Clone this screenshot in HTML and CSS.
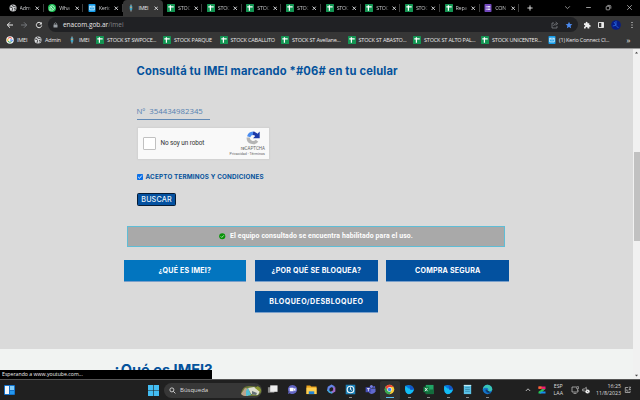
FILE: index.html
```
<!DOCTYPE html>
<html lang="es">
<head>
<meta charset="utf-8">
<title>IMEI</title>
<link rel="stylesheet" href="styles.css">
</head>
<body>
<svg class="defs" width="0" height="0">
  <defs>
    <symbol id="sheet" viewBox="0 0 8 8"><rect width="8" height="8" rx=".6" fill="#149553"/><path d="M1.3 2.8h5.4M3.4 1.2v5.6" stroke="#fff" stroke-width="1.2"/></symbol>
    <symbol id="globe" viewBox="0 0 8 8"><circle cx="4" cy="4" r="3.5" fill="#d8dadd"/><path d="M1 3l2 .4.6 1.2L3 6.8M3 .9l.8 1.3 1.4.1L6.8 3M5 4.2l1.5.6-1 1.6" stroke="#333" fill="none" stroke-width=".9"/></symbol>
    <symbol id="mail" viewBox="0 0 8 8"><rect x=".5" width="7" height="8" rx=".7" fill="#149cea"/><path d="M1.7 2.2h4.6v3.7H1.7zM1.7 2.3L4 4.3l2.3-2" fill="none" stroke="#fff" stroke-width=".7"/></symbol>
    <symbol id="enacom" viewBox="0 0 8 8"><path d="M4 .5v7" stroke="#cfd8dd" stroke-width=".8"/><path d="M2.7 2.3L4 1.2l1.3 1.1v3L4 6.6 2.7 5.3z" fill="#36a7ca"/><circle cx="4" cy="3.4" r=".8" fill="#e8a06a"/></symbol>
    <symbol id="close" viewBox="0 0 4 4"><path d="M.5.5l3 3m0-3l-3 3" stroke="#e2e3e5" stroke-width=".8"/></symbol>
    <symbol id="webdev" viewBox="0 0 12 12"><path d="M1.5 2Q4 .5 7 1.3T11 6q-.5 3-3.5 4.5T2 9Q.5 5 1.5 2z" fill="#0878dc"/><path d="M1.5 2L5 5l6 .8Q10 9.5 7 10.7T2 9Q.5 5 1.5 2z" fill="#14bdf2"/><path d="M6 1.5Q10 2 11 6L7 6.5z" fill="#1454c5"/></symbol>
  </defs>
</svg>

<header class="browser">
  <nav class="tabs">
    <div class="tab"><svg><use href="#globe"/></svg><span>Adm</span><svg class="x"><use href="#close"/></svg></div>
    <div class="tab"><svg viewBox="0 0 8 8"><circle cx="4" cy="4" r="4" fill="#20c45a"/><path d="M1.7 6.3l.4-1.4a2.2 2.2 0 1 1 .9 1z" fill="none" stroke="#fff" stroke-width=".7"/><path d="M3.1 3l.7 1.2 1.1.7" stroke="#fff" stroke-width=".8" fill="none"/></svg><span>Wha</span><svg class="x"><use href="#close"/></svg></div>
    <div class="tab"><svg><use href="#mail"/></svg><span>Keric</span><svg class="x"><use href="#close"/></svg></div>
    <div class="tab active"><svg><use href="#enacom"/></svg><span>IMEI</span><svg class="x"><use href="#close"/></svg></div>
    <div class="tab"><svg><use href="#sheet"/></svg><span>STOC</span><svg class="x"><use href="#close"/></svg></div>
    <div class="tab"><svg><use href="#sheet"/></svg><span>STOC</span><svg class="x"><use href="#close"/></svg></div>
    <div class="tab"><svg><use href="#sheet"/></svg><span>STOC</span><svg class="x"><use href="#close"/></svg></div>
    <div class="tab"><svg><use href="#sheet"/></svg><span>STOC</span><svg class="x"><use href="#close"/></svg></div>
    <div class="tab"><svg><use href="#sheet"/></svg><span>STOC</span><svg class="x"><use href="#close"/></svg></div>
    <div class="tab"><svg><use href="#sheet"/></svg><span>STOC</span><svg class="x"><use href="#close"/></svg></div>
    <div class="tab"><svg><use href="#sheet"/></svg><span>STOC</span><svg class="x"><use href="#close"/></svg></div>
    <div class="tab"><svg><use href="#sheet"/></svg><span>Repa</span><svg class="x"><use href="#close"/></svg></div>
    <div class="tab"><svg viewBox="0 0 8 8"><rect x=".5" width="7" height="8" rx=".7" fill="#7248bd"/><path d="M1.8 2.5h.8m.7 0h3M1.8 4h.8m.7 0h3M1.8 5.5h.8m.7 0h3" stroke="#fff" stroke-width=".8"/></svg><span>CON</span><svg class="x"><use href="#close"/></svg></div>
    <svg class="plus" viewBox="0 0 6 6"><path d="M3 .4v5.2M.4 3h5.2" stroke="#eee" stroke-width=".9"/></svg>
    <div class="window-controls">
      <svg viewBox="0 0 6 6"><path d="M1 2l2 2 2-2" fill="none" stroke="#aaa" stroke-width=".7"/></svg>
      <svg viewBox="0 0 6 6"><path d="M1 3h4" stroke="#bbb" stroke-width=".7"/></svg>
      <svg viewBox="0 0 6 6"><rect x="1" y="2" width="3" height="3" rx=".5" fill="none" stroke="#ccc" stroke-width=".6"/><path d="M2 1.2h2.2q.8 0 .8.8v2" fill="none" stroke="#ccc" stroke-width=".6"/></svg>
      <svg viewBox="0 0 6 6"><path d="M1 1l4 4m0-4L1 5" stroke="#ccc" stroke-width=".6"/></svg>
    </div>
  </nav>

  <div class="toolbar">
    <svg class="nav-icon" viewBox="0 0 8 8"><path d="M7 4H1.4M4 1.3L1.3 4 4 6.7" fill="none" stroke="#eee" stroke-width="1"/></svg>
    <svg class="nav-icon" viewBox="0 0 8 8"><path d="M1 4h5.6M4 1.3L6.7 4 4 6.7" fill="none" stroke="#7c7f83" stroke-width=".9"/></svg>
    <svg class="nav-icon" viewBox="0 0 8 8"><path d="M6.2 2.4A2.7 2.7 0 1 0 6.7 4.5" fill="none" stroke="#eee" stroke-width="1"/><path d="M6.8.9v2.6H4.2z" fill="#eee"/></svg>
    <div class="omnibox">
      <svg class="lock" viewBox="0 0 5 6"><rect x=".5" y="2.4" width="4" height="3.2" rx=".4" fill="#9aa0a6"/><path d="M1.4 2.6V1.5q1.1-1.4 2.2 0v1.1" fill="none" stroke="#9aa0a6" stroke-width=".7"/></svg>
      <span class="url">enacom.gob.ar<i>/imei</i></span>
      <svg class="share" viewBox="0 0 8 8"><path d="M3 2H1v5h5V5M2.5 5q.5-2.3 3-2.3M4.7 1l2 1.7-2 1.6" fill="none" stroke="#898d92" stroke-width=".7"/></svg>
      <svg class="star" viewBox="0 0 8 8"><path d="M4 .7l1 2.2 2.4.3-1.8 1.6.5 2.4L4 6 1.9 7.2l.5-2.4L.6 3.2 3 2.9z" fill="#4b8bf0"/></svg>
    </div>
    <div class="actions">
      <svg viewBox="0 0 8 8"><path d="M1 2.3h1.8q-.5-1.5.8-1.5t.9 1.5H6.3V4Q7.7 3.7 7.7 4.9T6.3 5.7V7.4H4.6Q4.6 6 3.6 6t-1 1.4H1V5.7Q2.3 5.6 2.3 4.8T1 4z" fill="#eee"/></svg>
      <svg viewBox="0 0 8 8"><path d="M1.5 1.5h5v5h-5z" fill="none" stroke="#eee" stroke-width=".9"/><path d="M4.3 1.5h2.3v5H4.3z" fill="#eee"/></svg>
      <svg class="avatar" viewBox="0 0 10 10"><circle cx="5" cy="5" r="4.8" fill="#071c87"/><path d="M5 1v4.5L7.5 8M1.8 6L5 5.2M3 2l2 3" stroke="#2a6de5" stroke-width=".8" fill="none"/></svg>
      <svg viewBox="0 0 8 8"><path d="M3.5 1h1v1h-1zm0 2.5h1v1h-1zm0 2.5h1v1h-1z" fill="#eee"/></svg>
    </div>
  </div>

  <div class="bookmarks">
    <div><svg viewBox="0 0 8 8"><circle cx="4" cy="4" r="3.8" fill="#f0f1f4"/><path d="M2 2.6A2.4 2.4 0 0 1 5.8 2.4" stroke="#ea4335" fill="none"/><path d="M1.8 2.8v2.5" stroke="#fbbc05"/><path d="M2 5.4q1.8 1.7 3.6.2" stroke="#34a853" fill="none"/><path d="M4 4h2.3q0 1-.7 1.7" stroke="#4285f4" fill="none"/></svg><span>IMEI</span></div>
    <div><svg><use href="#globe"/></svg><span>Admin</span></div>
    <div><svg><use href="#enacom"/></svg><span>IMEI</span></div>
    <div><svg><use href="#sheet"/></svg><span>STOCK ST SWPOCE...</span></div>
    <div><svg><use href="#sheet"/></svg><span>STOCK PARQUE</span></div>
    <div><svg><use href="#sheet"/></svg><span>STOCK CABALLITO</span></div>
    <div><svg><use href="#sheet"/></svg><span>STOCK ST Avellane...</span></div>
    <div><svg><use href="#sheet"/></svg><span>STOCK ST ABASTO...</span></div>
    <div><svg><use href="#sheet"/></svg><span>STOCK ST ALTO PAL...</span></div>
    <div><svg><use href="#sheet"/></svg><span>STOCK UNICENTER...</span></div>
    <div><svg><use href="#mail"/></svg><span>(1) Kerio Connect Cl...</span></div>
    <div class="more">»</div>
  </div>
</header>

<div class="viewport">
  <main>
    <section class="consulta">
      <h1>Consultá tu IMEI marcando *#06# en tu celular</h1>
      <div class="imei"><span>Nº</span><span>354434982345</span></div>
      <div class="captcha">
        <span class="box"></span><span class="robot">No soy un robot</span>
        <div class="brand">
          <svg viewBox="0 0 16 16"><path d="M3.7 6.7A4.8 4.8 0 0 1 8 3.3" fill="none" stroke="#4a8cf0" stroke-width="3.4"/><path d="M8 3.3a4.8 4.8 0 0 1 4.5 4.5" fill="none" stroke="#1c3aa9" stroke-width="3.4"/><path d="M14.7 1.5v6.8H8z" fill="#1c3aa9"/><path d="M3.2 7.5A4.9 4.9 0 0 0 12 10.7" fill="none" stroke="#b5b5b5" stroke-width="3.2"/></svg>
          <b>reCAPTCHA</b><small>Privacidad - Términos</small>
        </div>
      </div>
      <div class="terms"><svg viewBox="0 0 6 6"><rect width="6" height="6" rx=".8" fill="#0b70e8"/><path d="M1.2 3l1.3 1.3 2.3-2.8" fill="none" stroke="#fff" stroke-width=".9"/></svg><span>ACEPTO TERMINOS Y CONDICIONES</span></div>
      <button class="search-button"><span>BUSCAR</span></button>
      <div class="result"><svg viewBox="0 0 7 7"><circle cx="3.5" cy="3.5" r="3.3" fill="#079307"/><path d="M1.8 3.6L3 4.8l2.2-2.3" fill="none" stroke="#c3e9c3" stroke-width=".9"/></svg><span>El equipo consultado se encuentra habilitado para el uso.</span></div>
      <div class="topics">
        <a class="current"><span>¿QUÉ ES IMEI?</span></a>
        <a><span>¿POR QUÉ SE BLOQUEA?</span></a>
        <a><span>COMPRA SEGURA</span></a>
        <a class="second-row"><span>BLOQUEO/DESBLOQUEO</span></a>
      </div>
    </section>
    <section class="answer"><h2>¿Qué es IMEI?</h2></section>
  </main>
  <aside class="scrollbar">
    <svg viewBox="0 0 7 5"><path d="M2 3.4h3L3.5 1.7z" fill="#444"/></svg>
    <div class="thumb"></div>
    <svg class="down" viewBox="0 0 7 5"><path d="M2 1.7h3L3.5 3.5z" fill="#444"/></svg>
  </aside>
  <div class="status"><span>Esperando a www.youtube.com...</span></div>
</div>

<footer class="taskbar">
  <svg class="widgets" viewBox="0 0 11 10"><rect width="11" height="10" rx="1" fill="#1473cc"/><rect x="1" y="1" width="4" height="8" fill="#f1f6fb"/><rect x="6" y="1" width="4" height="4" fill="#82cdf8"/><rect x="6" y="6" width="4" height="3" fill="#2498ef"/></svg>
  <svg class="start" viewBox="0 0 11 11"><path d="M0 0h5.2v5.2H0zM5.8 0H11v5.2H5.8zM0 5.8h5.2V11H0zM5.8 5.8H11V11H5.8z" fill="#43bdf3"/></svg>
  <div class="search">
    <svg class="glass" viewBox="0 0 8 8"><circle cx="3.3" cy="3.3" r="2.3" fill="none" stroke="#ddd"/><path d="M5 5l2.3 2.3" stroke="#ddd"/></svg>
    <span>Búsqueda</span>
    <svg class="scene" viewBox="0 0 22 11"><path d="M1 8Q3 0 10 1l10 1q2 3 1 6l-4 3H2z" fill="#6b7838"/><path d="M1 9l4-6 5 1-2 7H2z" fill="#bba58e"/><path d="M8 3l6-1 6 4-2 4-7-1z" fill="#dedfce"/><path d="M6 6l2-3 3 7-5 1z" fill="#53bfd4"/><path d="M12 6l5 2-1 2-4-1z" fill="#667177"/><path d="M18 1l3 4-1 2-5-4z" fill="#8b962f"/></svg>
  </div>
  <div class="apps">
    <div><svg viewBox="0 0 12 12"><rect x="1" y="3.5" width="7" height="6" fill="#888"/><rect x="3.5" y="1.5" width="8" height="7" fill="#ededed"/></svg></div>
    <div><svg viewBox="0 0 12 12"><path d="M6 1a5 5 0 1 1-3 9l-2 .8.7-2.3A5 5 0 0 1 6 1z" fill="#6265c3"/><rect x="3" y="4" width="4.2" height="4" rx=".7" fill="#fff"/><path d="M7.5 5.5L9.2 4v4L7.5 6.7z" fill="#fff"/></svg></div>
    <div><svg viewBox="0 0 12 12"><path d="M.5 1.5h4l1.2 1.3h5.8V11H.5z" fill="#eaa21d"/><path d="M.5 4h11v7H.5z" fill="#ffd050"/><path d="M3 8h6v3H3z" fill="#2384d6"/></svg></div>
    <div><svg viewBox="0 0 12 12"><path d="M2.2 7.5L3 3.8 6 2l3 1.5" fill="none" stroke="#6484e8" stroke-width="2.4"/><path d="M9 3.5v4L6 9.5" fill="none" stroke="#a26bce" stroke-width="2.4"/><path d="M2 6.5l1.8 2.3 3 .8" fill="none" stroke="#43a4dc" stroke-width="2"/></svg></div>
    <div class="open"><svg viewBox="0 0 12 12"><rect x=".8" y=".8" width="10.4" height="10.4" fill="#1a82ba"/><circle cx="6" cy="6" r="3.6" fill="#176b9b" stroke="#f1f8fc" stroke-width="1.2"/><path d="M6 3.6V6l1.5 1" stroke="#fff" fill="none"/></svg></div>
    <div><svg viewBox="0 0 12 12"><circle cx="7" cy="2.8" r="1.7" fill="#7980df"/><circle cx="10" cy="3.5" r="1.2" fill="#5059c9"/><path d="M4 5h7.5v3q-1 3-4 3T4 8z" fill="#6069ce"/><rect x=".7" y="3.5" width="6" height="5.5" fill="#464eb8"/><path d="M2.2 5h3M3.7 5v3" stroke="#fff" stroke-width=".8"/></svg></div>
    <div class="focused"><svg viewBox="0 0 12 12"><circle cx="6" cy="6" r="5.2" fill="#fcc934"/><path d="M1.5 3.4A5.2 5.2 0 0 1 10.5 3.4H6L3.7 7.3z" fill="#ea4335"/><path d="M1.5 3.4A5.2 5.2 0 0 0 6 11.2L8.2 7.3H3.8z" fill="#34a853"/><circle cx="6" cy="6" r="2.5" fill="#fff"/><circle cx="6" cy="6" r="1.9" fill="#4285f4"/></svg></div>
    <div class="open"><svg><use href="#webdev"/></svg></div>
    <div class="open"><svg viewBox="0 0 12 12"><rect x="3" y="1" width="8.5" height="10" fill="#21a565"/><path d="M7 6h4.5v5H3V8h4z" fill="#136d3c"/><rect x=".5" y="3" width="6.2" height="6" fill="#107c41"/><path d="M2.2 4.3l2.7 3.5m0-3.5L2.2 7.8" stroke="#fff" stroke-width=".9"/></svg></div>
    <div class="open"><svg><use href="#webdev"/></svg></div>
    <div class="open"><svg viewBox="0 0 12 12"><rect x="2" y="1" width="8" height="10" fill="#5bc2e7"/><path d="M2 1.6h8" stroke="#c6e9f3" stroke-width="1.2"/><path d="M3.5 4h5m-5 2h5m-5 2h5" stroke="#287999" stroke-width=".7"/></svg></div>
    <div class="open"><svg viewBox="0 0 12 12"><circle cx="6" cy="6" r="5.2" fill="#1475ca"/><path d="M1 5.6A5.1 5.1 0 0 1 11.2 6q-.2 2-2.7 2T7 6.3Q7 4 4.5 4T1 5.6z" fill="#39c5b5"/><path d="M4.2 6.3Q4.5 9.8 9.5 9.7" stroke="#0b4791" stroke-width="1.3" fill="none"/><path d="M5 6.3q.5 2.5 3 2.3" stroke="#1b252e" fill="none"/></svg></div>
  </div>
  <div class="tray">
    <svg viewBox="0 0 8 8"><path d="M1.8 5L4 2.8 6.2 5" fill="none" stroke="#ddd" stroke-width=".8"/></svg>
    <svg viewBox="0 0 8 8"><path d="M.5.5h7V3L5.5 4.5H3L4 2.8H.5z" fill="#ed1c71"/><path d="M.5.5h3v2.3h-3z" fill="#f5732a"/><path d="M4.5 3H7L3 7.5H.5V5.7z" fill="#25c953"/><path d="M3 5.4h4.5v2.1H1.5z" fill="#168ef0"/></svg>
    <div class="lang">ESP<br>LAA</div>
    <svg viewBox="0 0 8 8"><path d="M5 1H1v5h6V4M2.5 7.4h3" fill="none" stroke="#ccc" stroke-width=".7"/><path d="M5.6.7h2v2h-2zM6.6 2.8v2" fill="none" stroke="#ccc" stroke-width=".6"/></svg>
    <svg viewBox="0 0 8 8"><path d="M.7 3h1.6l2-1.7v5.2l-2-1.6H.7z" fill="none" stroke="#ccc" stroke-width=".7"/><circle cx="5.6" cy="5.5" r="2.1" fill="#eee"/><path d="M4.8 4.8l1.6 1.5" stroke="#333" stroke-width=".6"/></svg>
    <div class="clock">16:25<br>11/8/2023</div>
    <svg viewBox="0 0 8 8"><path d="M4 1.5H1.3v5h4.8V4.8M4.7 1.2h2L5 3.6h2M2.8 3.3v1.8h1.7" fill="none" stroke="#ccc" stroke-width=".7"/></svg>
  </div>
</footer>
</body>
</html>
```
FILE: styles.css
```
* { box-sizing: border-box; }
body { margin: 0; width: 640px; height: 400px; overflow: hidden; display: flex; flex-direction: column; font-family: "Open Sans", "Noto Sans", sans-serif; background: #dadada; }
svg { display: block; flex: none; }
.defs { position: absolute; }
span, h1, h2 { white-space: nowrap; }

.browser { height: 48.5px; flex: none; background: #363636; color: #e8e8e8; border-bottom: .5px solid #999; }
.tabs { height: 16px; padding-left: 4px; display: flex; align-items: center; background: #000; }
.tab { width: 39.65px; height: 15px; flex: none; display: flex; align-items: center; padding-left: 4.5px; font-size: 5.4px; color: #c9cacc; background: linear-gradient(#3d3d3d, #3d3d3d) right center / 1px 8px no-repeat; }
.tab svg { width: 8px; height: 8px; }
.tab span { width: 12.5px; margin-left: 3px; letter-spacing: -.25px; line-height: 8px; -webkit-mask-image: linear-gradient(90deg, #000 65%, transparent); mask-image: linear-gradient(90deg, #000 65%, transparent); }
.tab .x { width: 4.5px; height: 4.5px; margin-left: 3px; }
.tab.active { height: 16px; background: #363636; border-radius: 4px 4px 0 0; color: #e8e8e8; }
.tab.active span { -webkit-mask-image: none; mask-image: none; }
.plus { width: 6px; height: 6px; margin-left: 8px; }
.window-controls { display: flex; gap: 13.6px; margin-left: auto; padding-right: 7px; position: relative; top: -1px; }
.window-controls svg { width: 7px; height: 7px; }
.toolbar { height: 17px; display: flex; align-items: center; padding-left: 6px; }
.nav-icon { width: 8px; height: 8px; margin-right: 6.3px; }
.omnibox { width: 530px; height: 15px; border-radius: 8px; background: #202124; display: flex; align-items: center; padding-left: 5px; margin-left: -1px; }
.lock { width: 5px; height: 6px; }
.url { font-size: 6.5px; margin-left: 5px; line-height: 9px; }
.url i { font-style: normal; color: #83868a; }
.share { width: 8px; height: 8px; margin-left: auto; }
.star { width: 8px; height: 8px; margin: 0 4.5px 0 6.5px; }
.actions { display: flex; align-items: center; gap: 6.3px; margin-left: 5px; }
.actions svg { width: 8px; height: 8px; }
.actions .avatar { width: 10px; height: 10px; }
.bookmarks { height: 14px; padding-left: 6px; display: grid; grid-template-columns: 28px 34px 28px 67px 56.5px 61.5px 66.5px 65.5px 68px 67px 78.5px 9px; align-items: center; font-size: 5.5px; }
.bookmarks div { display: flex; align-items: center; gap: 3px; }
.bookmarks svg { width: 8px; height: 8px; }
.bookmarks span { letter-spacing: -.18px; line-height: 8px; }
.bookmarks .more { font-size: 8px; line-height: 8px; }

.viewport { height: 330.5px; flex: none; display: flex; position: relative; }
main { width: 633px; background: #f1f3f2; }
.consulta { height: 300.5px; background: #dadada; padding: 14px 0 0 123.5px; color: #04529c; }
h1, h2 { margin: 0; font-family: Inter, sans-serif; font-weight: 700; }
h1 { font-size: 11.2px; line-height: 16px; margin-left: 13px; letter-spacing: .14px; }
.imei { width: 73px; height: 15px; margin: 26px 0 0 13px; border-bottom: 1px solid #6189b5; display: flex; align-items: center; gap: 4px; font: 7.8px/13px "Open Sans", sans-serif; color: #5681b1; }
.captcha { width: 133.5px; height: 33px; margin: 7px 0 0 13px; background: #f9f9f9; border: .5px solid #d3d3d3; border-radius: 1px; display: flex; align-items: center; padding: 0 4px 0 5px; box-shadow: 0 0 1px #ccc; font-family: Roboto, sans-serif; color: #333; }
.box { width: 13px; height: 13px; border: 1px solid #c1c1c1; border-radius: 1px; background: #fff; }
.robot { font-size: 6.4px; margin-left: 5px; letter-spacing: -.08px; }
.brand { margin-left: auto; display: flex; flex-direction: column; align-items: flex-end; color: #666; }
.brand svg { width: 16px; height: 16px; margin-right: 4px; }
.brand b { font-weight: 400; font-size: 4.5px; line-height: 6px; }
.brand small { font-size: 3.7px; line-height: 5px; white-space: nowrap; }
.terms { display: flex; align-items: center; gap: 3px; height: 8px; margin: 13.5px 0 0 13px; font: 700 6.3px/8px Inter, sans-serif; letter-spacing: .18px; }
.terms svg { width: 6px; height: 6px; }
.search-button { display: flex; align-items: center; justify-content: center; width: 39px; height: 13px; padding: 0; margin: 12px 0 0 13.5px; background: #0451a0; border: 1px solid #071c34; border-radius: 1.5px; color: #e9f1f8; font: 500 7.2px/10px Inter, sans-serif; letter-spacing: .15px; }
.result { width: 378px; height: 20.5px; margin: 20px 0 0 3.5px; background: #a9a9a9; border: 1px solid #5fbdd6; color: #fff; display: flex; align-items: center; justify-content: center; gap: 4.5px; font: 700 6.9px/9px Roboto, sans-serif; letter-spacing: .115px; }
.result svg { width: 6.5px; height: 6.5px; }
.topics { display: grid; grid-template-columns: repeat(3, 122.7px); column-gap: 8.8px; row-gap: 9px; margin-top: 13.5px; }
.topics a { height: 22px; display: flex; align-items: center; justify-content: center; background: #03519f; color: #fff; border-bottom: .5px solid #799fca; font: 700 7.1px/10px Inter, sans-serif; letter-spacing: .2px; }
.topics .current { background: #0275bf; }
.topics .second-row { grid-column: 2; letter-spacing: .48px; }
.answer h2 { margin: 12.5px 0 0 112.5px; font-size: 14.6px; line-height: 17px; color: #04529c; }
.scrollbar { width: 7px; background: #f1f1f1; display: flex; flex-direction: column; }
.scrollbar svg { width: 7px; height: 5px; margin-top: 1px; }
.thumb { width: 6px; height: 89px; margin: 97px 0 0 .5px; background: #c1c1c1; }
.scrollbar .down { margin-top: auto; margin-bottom: 1.5px; }
.status { position: absolute; left: 0; bottom: 0; width: 212px; height: 9.5px; background: #000; color: #eee; padding-left: 2px; font-size: 5.2px; line-height: 9px; }

.taskbar { height: 21px; flex: none; display: flex; align-items: center; background: #202020; color: #ddd; position: relative; border-top: .5px solid #555; }
.widgets { width: 11px; height: 10px; margin-left: 4px; }
.start { width: 11px; height: 11px; margin-left: 133px; }
.search { width: 98px; height: 15px; border-radius: 8px; background: #373737; margin-left: 5px; display: flex; align-items: center; padding-left: 5px; }
.glass { width: 7px; height: 7px; }
.search span { margin-left: 4px; font-size: 6px; line-height: 9px; }
.scene { width: 22px; height: 11px; margin: 0 0 0 auto; border-radius: 5px; overflow: hidden; }
.apps { display: flex; margin-left: 1px; }
.apps div { width: 19.5px; height: 19px; display: flex; flex-direction: column; align-items: center; padding-top: 3.5px; border-radius: 2px; }
.apps svg { width: 11px; height: 11px; }
.apps .open::after, .apps .focused::after { content: ""; width: 3px; height: 1px; margin-top: 2px; background: #888; }
.apps .focused { background: #303030; }
.apps .focused::after { width: 8px; background: #5bb9ea; }
.tray { display: flex; align-items: center; margin-left: auto; padding-right: 8px; font-size: 5.3px; line-height: 7.4px; }
.tray svg { width: 8px; height: 8px; }
.tray > svg + svg { margin-left: 6px; }
.lang { margin: 0 8px; text-align: center; }
.lang + svg + svg { margin-left: 3px; }
.clock { width: 31px; text-align: right; margin-right: 3px; }
```
